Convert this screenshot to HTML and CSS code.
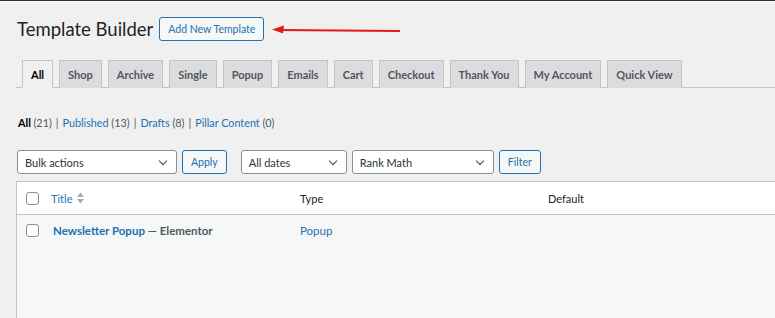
FILE: index.html
```html
<!DOCTYPE html>
<html lang="en">
<head>
    <meta charset="UTF-8">
    <meta name="viewport" content="width=device-width, initial-scale=1.0">
    <title>Template Builder</title>
    <link rel="stylesheet" href="styles.css">
</head>
<body>

    <div class="wrap">

        <div class="page-head">
            <h1 class="page-title">Template Builder</h1>
            <a href="#" class="button">Add New Template</a>
            <!-- seta de destaque -->
            <svg class="pointer-arrow" width="130" height="12" viewBox="0 0 130 12">
                <path d="M8 6 L128 7" stroke="#e01b1b" stroke-width="2" fill="none"/>
                <path d="M0 5.6 L12 1.5 L11 9.5 Z" fill="#e01b1b"/>
            </svg>
        </div>

        <nav class="nav-tabs">
            <a href="#" class="nav-tab active">All</a>
            <a href="#" class="nav-tab">Shop</a>
            <a href="#" class="nav-tab">Archive</a>
            <a href="#" class="nav-tab">Single</a>
            <a href="#" class="nav-tab">Popup</a>
            <a href="#" class="nav-tab">Emails</a>
            <a href="#" class="nav-tab">Cart</a>
            <a href="#" class="nav-tab">Checkout</a>
            <a href="#" class="nav-tab">Thank You</a>
            <a href="#" class="nav-tab">My Account</a>
            <a href="#" class="nav-tab">Quick View</a>
        </nav>

        <ul class="subsubsub">
            <li><a href="#" class="current">All <span class="count">(21)</span></a><span class="sep">|</span></li>
            <li><a href="#">Published <span class="count">(13)</span></a><span class="sep">|</span></li>
            <li><a href="#">Drafts <span class="count">(8)</span></a><span class="sep">|</span></li>
            <li><a href="#">Pillar Content <span class="count">(0)</span></a></li>
        </ul>

        <div class="tablenav">
            <div class="actions">
                <div class="select select-bulk">Bulk actions</div>
                <a href="#" class="button">Apply</a>
            </div>
            <div class="actions">
                <div class="select select-dates">All dates</div>
                <div class="select select-seo">Rank Math</div>
                <a href="#" class="button">Filter</a>
            </div>
        </div>

        <div class="list-table">
            <div class="table-row table-head">
                <div class="col-check"><span class="checkbox"></span></div>
                <div class="col-title">
                    <a href="#">Title</a>
                    <span class="sort-arrows">
                        <svg width="7" height="12" viewBox="0 0 7 12">
                            <path d="M0 5 L3.5 0.5 L7 5 Z" fill="#a7aaad"/>
                            <path d="M0 7 L3.5 11.5 L7 7 Z" fill="#a7aaad"/>
                        </svg>
                    </span>
                </div>
                <div class="col-type">Type</div>
                <div class="col-default">Default</div>
            </div>
            <div class="table-row alternate">
                <div class="col-check"><span class="checkbox"></span></div>
                <div class="col-title">
                    <strong><a href="#">Newsletter Popup</a> — Elementor</strong>
                </div>
                <div class="col-type"><a href="#">Popup</a></div>
                <div class="col-default"></div>
            </div>
        </div>

    </div>

</body>
</html>
```

FILE: styles.css
```css
/* --- Base --- */
* {
    margin: 0;
    padding: 0;
    box-sizing: border-box;
}

body {
    font-family: Lato, Roboto, sans-serif;
    font-size: 12px;
    color: #3c434a;
    background-color: #f0f0f1;
    border-top: 1px solid #2c3338;
    box-shadow: inset 0 1px 0 #fafafa;
    overflow: hidden;
}

a {
    color: #2271b1;
    text-decoration: none;
}

.wrap {
    padding: 16px 0 0 16px;
}

/* --- Cabeçalho --- */
.page-head {
    display: flex;
    align-items: center;
    height: 24px;
}
.page-title {
    font-size: 18.5px;
    font-weight: 400;
    color: #1d2327;
    margin-left: 1px;
    margin-right: 6px;
}
.button {
    display: inline-flex;
    align-items: center;
    height: 24px;
    padding: 0 8px;
    font-size: 10.5px;
    color: #2271b1;
    background: #f6f7f7;
    border: 1px solid #2271b1;
    border-radius: 3px;
    white-space: nowrap;
}
.pointer-arrow {
    margin-left: 8px;
    margin-top: 1px;
}

/* --- Abas --- */
.nav-tabs {
    display: flex;
    gap: 6px;
    margin-top: 19px;
    padding-left: 6px;
    border-bottom: 1px solid #c3c4c7;
}
.nav-tab {
    display: flex;
    align-items: center;
    height: 28px;
    padding: 0 8px;
    margin-bottom: -1px;
    font-size: 11px;
    font-weight: 700;
    color: #50575e;
    background: #dcdcde;
    border: 1px solid #c3c4c7;
    border-bottom: none;
}
.nav-tab.active {
    color: #000;
    background: #f0f0f1;
    border-bottom: 1px solid #f0f0f1;
}

/* --- Filtros de status --- */
.subsubsub {
    display: flex;
    list-style: none;
    margin: 28px 0 0 2px;
    font-size: 10.8px;
    color: #50575e;
}
.subsubsub .sep {
    color: #50575e;
    padding: 0 4px;
}
.subsubsub a .count {
    color: #50575e;
}
.subsubsub a.current {
    color: #000;
    font-weight: 700;
}
.subsubsub a.current .count {
    font-weight: 400;
}

/* --- Ações da tabela --- */
.tablenav {
    display: flex;
    gap: 14px;
    margin-top: 21px;
    margin-left: 1px;
}
.actions {
    display: flex;
    gap: 5px;
}
.select {
    position: relative;
    display: flex;
    align-items: center;
    height: 24px;
    padding: 0 7px;
    font-size: 11px;
    color: #2c3338;
    background: #fff;
    border: 1px solid #8c8f94;
    border-radius: 3px;
}
.select::after {
    content: "";
    position: absolute;
    right: 10px;
    top: 7px;
    width: 5px;
    height: 5px;
    border-right: 1.5px solid #3c434a;
    border-bottom: 1.5px solid #3c434a;
    transform: rotate(45deg);
}
.select-bulk { width: 160px; }
.select-dates { width: 106px; }
.select-seo { width: 142px; }

/* --- Tabela --- */
.list-table {
    margin-top: 7px;
    border-top: 1px solid #c3c4c7;
    border-left: 1px solid #c3c4c7;
    min-height: 140px;
    background: #f6f7f7;
}
.table-row {
    display: flex;
    align-items: center;
    font-size: 11px;
}
.table-head {
    height: 33px;
    background: #fff;
    border-bottom: 1px solid #c3c4c7;
    color: #1d2327;
}
.alternate {
    height: 31px;
    font-size: 11.5px;
    color: #50575e;
}
.col-check {
    width: 34px;
    padding-left: 9px;
    display: flex;
}
.checkbox {
    display: block;
    width: 13px;
    height: 13px;
    background: #fff;
    border: 1px solid #8c8f94;
    border-radius: 3px;
}
.col-title {
    width: 249px;
    display: flex;
    align-items: center;
    gap: 5px;
}
.col-type {
    width: 248px;
}
.sort-arrows {
    display: flex;
}
.alternate .col-title {
    padding-left: 2px;
}
.alternate strong {
    font-weight: 700;
}
```
